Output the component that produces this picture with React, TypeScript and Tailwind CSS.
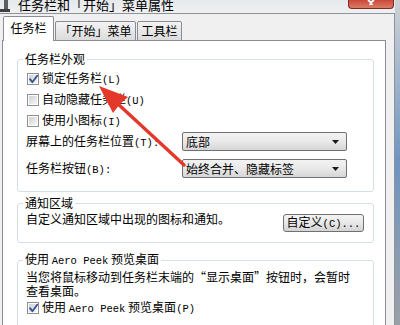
import React from "react";

function Check({ checked }: { checked?: boolean }) {
  return (
    <span className="relative w-[12px] h-[12px] shrink-0 border border-[#8e8f8f] bg-white p-[1px] flex">
      <span className="flex-1 bg-gradient-to-br from-[#cdd1d6] to-[#f7f7f7]" />
      {checked && (
        <svg className="absolute left-[0px] top-[0px]" width="11" height="11" viewBox="0 0 11 11">
          <path d="M2 5.2 L4.4 8.2 L9.2 1.8" fill="none" stroke="#3a5490" strokeWidth="1.9" strokeLinecap="round" strokeLinejoin="round" />
        </svg>
      )}
    </span>
  );
}

function Mono({ children }: { children: React.ReactNode }) {
  return <span className="font-['Liberation_Mono',monospace] text-[10.5px]">{children}</span>;
}

function Dropdown({ value }: { value: string }) {
  return (
    <div className="w-[165px] h-[19px] border border-[#707070] rounded-[2px] bg-gradient-to-b from-[#f3f3f3] via-[#e9e9e9] to-[#d6d6d6] flex items-center pl-[3px] pr-[7px]">
      <span className="flex-1 leading-[14px]">{value}</span>
      <svg width="7" height="4" viewBox="0 0 7 4">
        <path d="M0 0H7L3.5 4Z" fill="#1a1a1a" />
      </svg>
    </div>
  );
}

export default function App() {
  return (
    <div className="w-[400px] h-[325px] overflow-hidden relative flex bg-[#e9ebee] font-['Noto_Sans_CJK_SC','Noto_Sans',sans-serif] text-[12px] text-black">
      <div className="w-[395px] flex flex-col">
        {/* Title bar */}
        <div className="h-[19px] flex items-start bg-gradient-to-b from-[#e6e9ec] to-[#eef0f2]">
          <svg width="12" height="13" viewBox="0 0 12 13" className="shrink-0">
            <rect x="4" y="0" width="4" height="9" fill="#5b5f63" />
            <rect x="0" y="9" width="10" height="3" fill="#3d4144" />
          </svg>
          <span className="ml-[6px] -mt-[3px] text-[13px] leading-[15px]">任务栏和「开始」菜单属性</span>
          <div className="ml-auto mr-[1px] w-[46px] h-[9px] rounded-b-[4px] border border-t-0 border-[#7a2b22] bg-gradient-to-b from-[#c9473a] to-[#db7a66] flex justify-center">
            <svg width="10" height="5" viewBox="0 0 10 5">
              <path d="M2 0 L5 2.5 L8 0 M3.5 5 L5 3.6 L6.5 5" stroke="#ffffff" strokeWidth="1.8" fill="none" />
            </svg>
          </div>
        </div>
        {/* Client area */}
        <div className="flex-1 bg-[#f0f0f0] border-t border-r border-[#8f9399] pl-[2px] pt-[2px] flex flex-col">
          {/* Tabs */}
          <div className="relative z-10 -mb-px flex items-end pl-[1px] h-[25px]">
            <div className="h-[25px] w-[51px] border border-b-0 border-[#898c95] rounded-t-[2px] bg-white flex justify-center pt-[4px]">
              <span className="leading-[14px]">任务栏</span>
            </div>
            <div className="ml-[1px] h-[20px] w-[81px] border border-[#898c95] rounded-t-[2px] bg-gradient-to-b from-[#f3f3f3] to-[#dcdcdc] flex justify-center pt-[2px]">
              <span className="leading-[14px]">「开始」菜单</span>
            </div>
            <div className="ml-[1px] h-[20px] w-[45px] border border-[#898c95] rounded-t-[2px] bg-gradient-to-b from-[#f3f3f3] to-[#dcdcdc] flex justify-center pt-[2px]">
              <span className="leading-[14px]">工具栏</span>
            </div>
          </div>
          {/* Panel */}
          <div className="w-[384px] flex-1 border border-[#898c95] bg-white pl-[14px] pt-[11px] flex flex-col">
            {/* Group 1 */}
            <fieldset className="w-[357px] border border-[#d5dfe5] rounded-[3px] pl-[8px] pr-[9px] pt-[2px] pb-[13px]">
              <legend className="-ml-[3px] px-[2px] leading-[14px]">任务栏外观</legend>
              <div className="h-[21px] flex items-center">
                <span className="ml-[1px]"><Check checked /></span>
                <span className="ml-[3px] leading-[14px]">锁定任务栏<Mono>(L)</Mono></span>
              </div>
              <div className="h-[21px] flex items-center">
                <span className="ml-[1px]"><Check /></span>
                <span className="ml-[3px] leading-[14px]">自动隐藏任务栏<Mono>(U)</Mono></span>
              </div>
              <div className="h-[21px] flex items-center">
                <span className="ml-[1px]"><Check /></span>
                <span className="ml-[3px] leading-[14px]">使用小图标<Mono>(I)</Mono></span>
              </div>
              <div className="mt-[1px] flex items-center">
                <span className="w-[156px] leading-[14px]">屏幕上的任务栏位置<Mono>(T):</Mono></span>
                <Dropdown value="底部" />
              </div>
              <div className="mt-[8px] flex items-center">
                <span className="w-[156px] leading-[14px]">任务栏按钮<Mono>(B):</Mono></span>
                <Dropdown value="始终合并、隐藏标签" />
              </div>
            </fieldset>
            {/* Group 2 */}
            <fieldset className="mt-[4px] w-[357px] border border-[#d5dfe5] rounded-[3px] pl-[8px] pr-[9px] pb-[10px]">
              <legend className="-ml-[3px] px-[2px] leading-[14px]">通知区域</legend>
              <div className="flex items-start justify-between">
                <span className="mt-[2px] leading-[14px]">自定义通知区域中出现的图标和通知。</span>
                <div className="mt-[4px] w-[81px] h-[18px] border border-[#707070] rounded-[3px] bg-gradient-to-b from-[#f4f4f4] via-[#e8e8e8] to-[#d3d3d3] flex items-center justify-center">
                  <span className="leading-[14px]">自定义<Mono>(C)...</Mono></span>
                </div>
              </div>
            </fieldset>
            {/* Group 3 */}
            <fieldset className="mt-[9px] w-[357px] border border-[#d5dfe5] rounded-[3px] pl-[8px] pr-[9px] pb-[10px]">
              <legend className="-ml-[3px] px-[2px] leading-[14px]">
                使用 <Mono>Aero Peek</Mono> 预览桌面
              </legend>
              <div className="mt-[2px] leading-[14px]">
                当您将鼠标移动到任务栏末端的“显示桌面”按钮时，会暂时
                <br />
                查看桌面。
              </div>
              <div className="h-[20px] flex items-center">
                <span className="ml-[1px]"><Check checked /></span>
                <span className="ml-[3px] leading-[14px]">
                  使用 <Mono>Aero Peek</Mono> 预览桌面<Mono>(P)</Mono>
                </span>
              </div>
            </fieldset>
          </div>
        </div>
      </div>
      <div className="w-[5px] bg-gradient-to-b from-[#cfd2d5] via-[#6f94c0] to-[#9aa0a6]" />
      {/* Red arrow annotation */}
      <svg className="absolute left-0 top-0 pointer-events-none" width="400" height="325" viewBox="0 0 400 325">
        <line x1="184" y1="165" x2="118" y2="104" stroke="#e4382b" strokeWidth="3.4" strokeLinecap="round" />
        <path d="M99 86 L128 97 L120 104 L113 113 Z" fill="#e4382b" />
      </svg>
    </div>
  );
}
